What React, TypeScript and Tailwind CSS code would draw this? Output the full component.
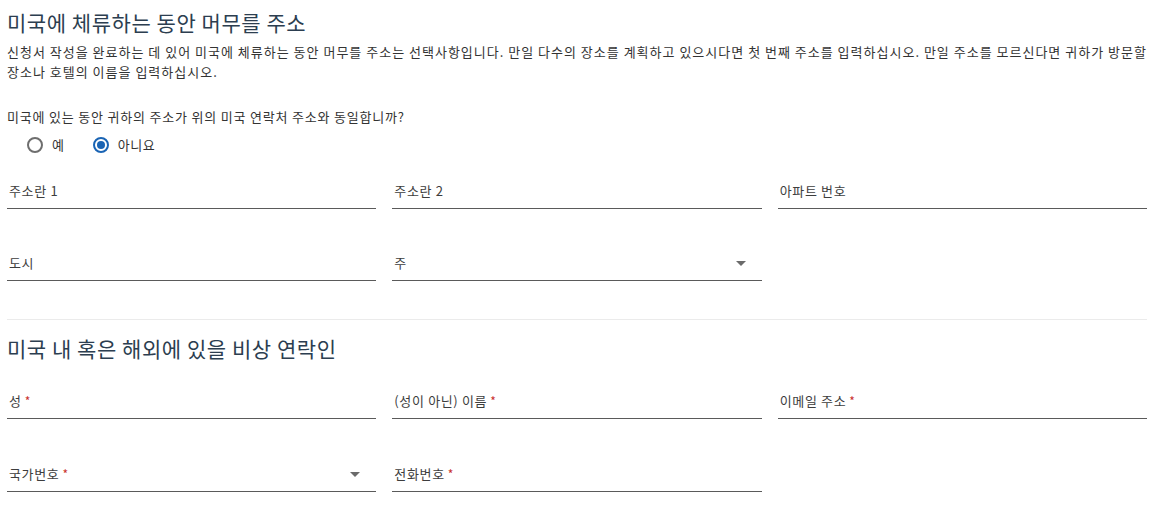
const font = { fontFamily: '"Noto Sans CJK KR", "Noto Sans", sans-serif' };

type FieldProps = {
  label: string;
  required?: boolean;
  select?: boolean;
};

function Field({ label, required, select }: FieldProps) {
  return (
    <div className="pt-[24px] border-b border-[#5a5a5a]">
      <div className="flex items-center h-[20px] mb-[7px] pl-[2px] pr-[16px]">
        <span className="text-[13px] leading-[20px] tracking-[0.65px] text-[#3d3d3d]">{label}</span>
        {required && (
          <span className="ml-[3px] text-[12px] leading-[20px] text-[#c9302c]">*</span>
        )}
        {select && (
          <span className="ml-auto w-0 h-0 border-l-[5px] border-r-[5px] border-t-[5px] border-l-transparent border-r-transparent border-t-[#6b6b6b]" />
        )}
      </div>
    </div>
  );
}

function Radio({ label, checked }: { label: string; checked?: boolean }) {
  return (
    <label className="flex items-center gap-[9px] cursor-pointer">
      <span
        className={
          checked
            ? "w-[16px] h-[16px] rounded-full border-2 border-[#1a64b4] flex items-center justify-center"
            : "w-[16px] h-[16px] rounded-full border-2 border-[#6e6e6e]"
        }
      >
        {checked && <span className="w-[8px] h-[8px] rounded-full bg-[#1a64b4]" />}
      </span>
      <span className="text-[13px] leading-[20px] tracking-[0.65px] text-[#333]">{label}</span>
    </label>
  );
}

export default function App() {
  return (
    <div className="bg-white min-h-[510px] pl-[7px] pr-[10px] pt-[7px]" style={font}>
      {/* Stay address */}
      <h2 className="text-[21px] leading-[30px] tracking-[0.55px] text-[#2c3e50]">미국에 체류하는 동안 머무를 주소</h2>
      <p className="mt-[5px] text-[13px] leading-[20px] tracking-[1px] text-[#333]">
        신청서 작성을 완료하는 데 있어 미국에 체류하는 동안 머무를 주소는 선택사항입니다. 만일 다수의 장소를 계획하고 있으시다면 첫 번째 주소를 입력하십시오. 만일 주소를 모르신다면 귀하가 방문할 장소나 호텔의 이름을 입력하십시오.
      </p>

      <p className="mt-[25px] text-[13px] leading-[20px] tracking-[0.8px] text-[#333]">
        미국에 있는 동안 귀하의 주소가 위의 미국 연락처 주소와 동일합니까?
      </p>
      <div className="mt-[8px] ml-[20px] flex items-center gap-[28px] h-[20px]">
        <Radio label="예" />
        <Radio label="아니요" checked />
      </div>

      <div className="mt-[2px] grid grid-cols-3 gap-x-4 gap-y-5">
        <Field label="주소란 1" />
        <Field label="주소란 2" />
        <Field label="아파트 번호" />
        <Field label="도시" />
        <Field label="주" select />
      </div>

      <div className="mt-[38px] border-t border-[#ebebeb]" />

      {/* Emergency contact */}
      <h2 className="mt-[13px] text-[21px] leading-[30px] tracking-[0.55px] text-[#2c3e50]">미국 내 혹은 해외에 있을 비상 연락인</h2>
      <div className="mt-[4px] grid grid-cols-3 gap-x-4 gap-y-[21px]">
        <Field label="성" required />
        <Field label="(성이 아닌) 이름" required />
        <Field label="이메일 주소" required />
        <Field label="국가번호" required select />
        <Field label="전화번호" required />
      </div>
    </div>
  );
}
